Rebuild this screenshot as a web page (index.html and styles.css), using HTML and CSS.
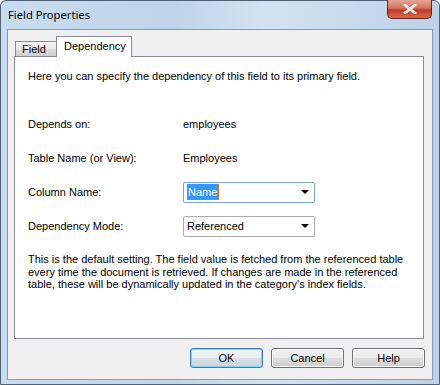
FILE: index.html
```html
<!DOCTYPE html>
<html>
<head>
<meta charset="utf-8">
<link rel="stylesheet" href="styles.css">
</head>
<body>
<div class="window">
  <div class="titlebar">
    <span class="title">Field Properties</span>
    <div class="close">
      <svg width="14" height="10" viewBox="0 0 14 10"><path d="M2 1 L12 9 M12 1 L2 9" stroke="#ffffff" stroke-width="2.6" stroke-linecap="square" fill="none"/><path d="M2 1 L12 9 M12 1 L2 9" stroke="#5a1a10" stroke-width="0.6" fill="none" opacity="0.25"/></svg>
    </div>
  </div>
  <div class="client">
    <div class="tabs">
      <div class="tab">Field</div>
      <div class="tab active">Dependency</div>
    </div>
    <div class="panel">
      <p class="intro">Here you can specify the dependency of this field to its primary field.</p>
      <div class="grid">
        <div class="label">Depends on:</div>
        <div class="value">employees</div>
        <div class="label">Table Name (or View):</div>
        <div class="value">Employees</div>
        <div class="label">Column Name:</div>
        <div class="combo focus"><span class="sel">Name</span><span class="arrow"></span></div>
        <div class="label">Dependency Mode:</div>
        <div class="combo"><span class="txt">Referenced</span><span class="arrow"></span></div>
      </div>
      <p class="desc">This is the default setting. The field value is fetched from the referenced table every time the document is retrieved. If changes are made in the referenced table, these will be dynamically updated in the category's index fields.</p>
    </div>
    <div class="buttons">
      <div class="btn default">OK</div>
      <div class="btn">Cancel</div>
      <div class="btn">Help</div>
    </div>
  </div>
</div>
</body>
</html>
```
FILE: styles.css
```css
html, body {
  margin: 0;
  padding: 0;
  background: #ffffff;
}
body {
  width: 440px;
  height: 385px;
  overflow: hidden;
}
.window {
  box-sizing: border-box;
  width: 440px;
  height: 385px;
  border: 1px solid #4f6275;
  border-radius: 6px 6px 0 0;
  background: linear-gradient(90deg, #c9dcef 0%, #bfd4ea 40%, #d3e2f1 60%, #bcd1e8 100%);
  padding: 0 6px 4px 6px;
  display: flex;
  flex-direction: column;
}
.titlebar {
  height: 28px;
  display: flex;
  justify-content: space-between;
  align-items: flex-start;
  flex: none;
}
.title {
  font-family: "Noto Sans", sans-serif;
  font-size: 11.2px;
  color: #000;
  padding: 6px 0 0 1px;
  line-height: 16px;
}
.close {
  width: 45px;
  height: 19px;
  margin-top: -1px;
  margin-right: 1px;
  box-sizing: border-box;
  border: 1px solid #5a2a22;
  border-top: none;
  border-radius: 0 0 5px 5px;
  background: linear-gradient(180deg, #e8a493 0%, #d47461 45%, #c0392b 55%, #d46a4c 100%);
  display: flex;
  align-items: center;
  justify-content: center;
}
.client {
  flex: 1;
  background: #f0f0f0;
  border: 1px solid #8a9bb0;
  display: flex;
  flex-direction: column;
  padding: 6px 8px 0 6px;
  font-family: "Liberation Sans", Arial, sans-serif;
  font-size: 11px;
  color: #000;
}
.tabs {
  display: flex;
  align-items: flex-end;
  height: 20px;
  padding-left: 1px;
  position: relative;
  z-index: 1;
  flex: none;
}
.tab {
  box-sizing: border-box;
  width: 42px;
  height: 15px;
  padding: 1px 0 0 6px;
  border: 1px solid #898c95;
  border-bottom: none;
  background: linear-gradient(180deg, #f2f2f2 0%, #ebebeb 50%, #dddddd 51%, #cfcfcf 100%);
  line-height: 13px;
}
.tab.active {
  height: 21px;
  margin-bottom: -1px;
  margin-left: -1px;
  background: #ffffff;
  padding: 3px 0 0 7px;
  width: 76px;
}
.panel {
  box-sizing: border-box;
  width: 410px;
  height: 283px;
  border: 1px solid #898c95;
  background: #ffffff;
  padding: 13px 13px 0 13px;
  flex: none;
}
.intro {
  margin: 0;
  line-height: 13px;
}
.grid {
  display: grid;
  grid-template-columns: 155px 132px;
  grid-auto-rows: 34px;
  align-items: center;
  margin-top: 24px;
  row-gap: 0;
}
.grid > div {
  line-height: 13px;
}
.combo {
  box-sizing: border-box;
  height: 21px;
  border: 1px solid #abadb3;
  border-radius: 2px;
  background: #fff;
  display: flex;
  align-items: center;
  justify-content: space-between;
  padding: 0 5px 0 3px;
}
.combo.focus {
  border-color: #7da2ce;
}
.sel {
  background: #3399ff;
  color: #fff;
  padding: 2px 1px 1px 1px;
  line-height: 13px;
  border-right: 1px solid #e0781e;
}
.arrow {
  width: 0;
  height: 0;
  border-left: 4px solid transparent;
  border-right: 4px solid transparent;
  border-top: 4px solid #000;
}
.desc {
  margin: 10px 0 0 0;
  line-height: 12.5px;
  width: 382px;
}
.buttons {
  display: flex;
  justify-content: flex-end;
  gap: 8px;
  margin-top: 9px;
  margin-right: -1px;
}
.btn {
  box-sizing: border-box;
  width: 73px;
  height: 20px;
  border: 1px solid #707070;
  border-radius: 3px;
  background: linear-gradient(180deg, #f2f2f2 0%, #ebebeb 50%, #dddddd 51%, #cfcfcf 100%);
  display: flex;
  align-items: center;
  justify-content: center;
  box-shadow: inset 0 0 0 1px #fcfcfc;
}
.btn.default {
  border-color: #3c7fb1;
  box-shadow: inset 0 0 0 1px #7fd0f3;
  background: linear-gradient(180deg, #f0f4f7 0%, #e8eef2 50%, #d8e0e6 51%, #cdd6dd 100%);
}
```
